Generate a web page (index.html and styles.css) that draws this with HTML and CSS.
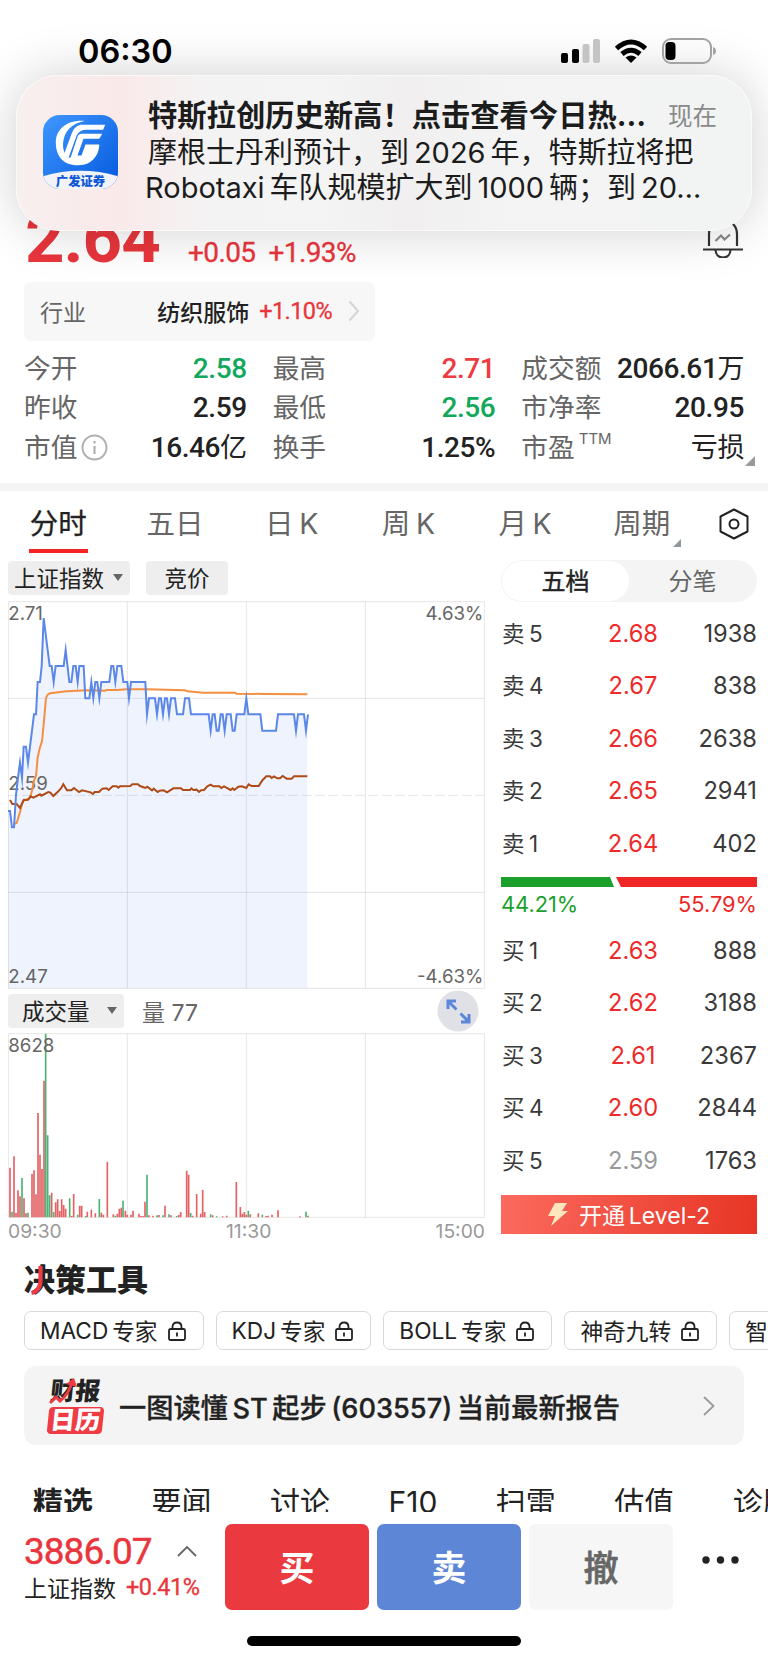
FILE: index.html
```html
<!DOCTYPE html>
<html lang="zh-CN">

<head>
    <meta charset="UTF-8">
    <meta name="viewport" content="width=device-width, initial-scale=1.0">
    <title>行情</title>
    <link rel="stylesheet" href="styles.css">
</head>

<body>
    <header class="status-bar">
        <span class="clock">06:30</span>
        <svg class="status-icons" width="156" height="28" viewBox="0 0 156 28">
            <rect x="0" y="16" width="7" height="10" rx="2" />
            <rect x="11" y="12" width="7" height="14" rx="2" />
            <rect x="21.500" y="7" width="7" height="19" rx="2" fill="#c4c4c4" />
            <rect x="32" y="2" width="7" height="24" rx="2" fill="#c4c4c4" />
            <g fill="none" stroke="#000" stroke-width="5">
                <path d="M55.500 11.500Q70 -1.500 84.500 11.500" />
                <path d="M61 17Q70 9.500 79 17" />
            </g>
            <path d="M70 26L64.500 20.500Q70 16.500 75.500 20.500Z" />
            <rect x="102" y="2" width="48" height="24" rx="8" fill="none" stroke="#a3a3a3" stroke-width="2" />
            <rect x="104.500" y="5" width="10" height="18" rx="4" />
            <path d="M152 10Q155 11 155 14Q155 17 152 18Z" fill="#a3a3a3" />
        </svg>
    </header>

    <div class="notice">
        <svg class="app-icon" width="75" height="75" viewBox="0 0 76 76">
            <defs>
                <linearGradient id="appBlue" x1="0" y1="0" x2="1" y2="1">
                    <stop offset="0" stop-color="#3f97ff" />
                    <stop offset="1" stop-color="#0458dc" />
                </linearGradient>
                <clipPath id="appShape"><rect width="76" height="75" rx="17" /></clipPath>
            </defs>
            <g clip-path="url(#appShape)">
                <rect width="76" height="76" fill="url(#appBlue)" />
                <path d="M0 62Q38 51 76 62V76H0Z" fill="#f1f3f8" />
            </g>
            <path d="M42 6C22 5 13 16 13 28C13 43 22 51 36 51C50 51 57 40 57 30H43L39 41L35 41L41 24H57L60 19H39Q36 19 35 22L28 43L25 43C20 38 19 29 22 21C25 13 32 8 42 6Z" fill="#fff" />
            <path d="M38 10H63L61 15H44Q37 15 34 21L26 43H20L29 19Q31 12 38 10Z" fill="#fff" />
            <text x="38" y="72" text-anchor="middle" class="app-name">广发证券</text>
        </svg>
        <div class="notice-text">
            <div class="notice-head">
                <strong>特斯拉创历史新高！点击查看今日热…</strong>
                <time>现在</time>
            </div>
            <p>摩根士丹利预计，到<i></i>2026<i></i>年，特斯拉将把</p>
            <p class="pull">Robotaxi<i></i>车队规模扩大到<i></i>1000<i></i>辆；到<i></i>20…</p>
        </div>
    </div>

    <main>
        <section class="quote">
            <div class="price-row">
                <span class="price">2.64</span>
                <span class="change">+0.05</span>
                <span class="change">+1.93%</span>
                <svg class="bell" width="40" height="44" viewBox="0 0 40 44" fill="none" stroke="#333" stroke-width="2.200">
                    <path d="M6 32V20C6 12 12 6 20 6S34 12 34 20V32" />
                    <path d="M0 35.500H40" />
                    <path d="M12.500 36C13 46 27 46 27.500 36" />
                    <path d="M12.500 27L18 21.500L21.500 25.500L27 20.500" stroke="#888" />
                </svg>
            </div>

            <div class="industry">
                <span class="industry-label">行业</span>
                <span class="industry-name">纺织服饰</span>
                <span class="industry-rate">+1.10%</span>
                <svg width="12" height="22" viewBox="0 0 12 22"><path d="M1.500 1.500L10 11L1.500 20.500" fill="none" stroke="#d4d4d4" stroke-width="2" /></svg>
            </div>

            <div class="stats">
                <dl>
                    <div><dt>今开</dt><dd class="down">2.58</dd></div>
                    <div><dt>昨收</dt><dd>2.59</dd></div>
                    <div>
                        <dt>市值<svg class="info" width="27" height="27" viewBox="0 0 27 27"><circle cx="13.500" cy="13.500" r="12" fill="none" stroke="#b0b0b0" stroke-width="2" /><path d="M13.500 12V20M13.500 7V9.500" stroke="#aaa" stroke-width="2" /></svg></dt>
                        <dd>16.46<small>亿</small></dd>
                    </div>
                </dl>
                <dl>
                    <div><dt>最高</dt><dd class="up">2.71</dd></div>
                    <div><dt>最低</dt><dd class="down">2.56</dd></div>
                    <div><dt>换手</dt><dd>1.25%</dd></div>
                </dl>
                <dl>
                    <div><dt>成交额</dt><dd>2066.61<small>万</small></dd></div>
                    <div><dt>市净率</dt><dd>20.95</dd></div>
                    <div class="more-corner"><dt>市盈<sup>TTM</sup></dt><dd><small>亏损</small></dd></div>
                </dl>
            </div>
        </section>

        <nav class="period-tabs">
            <a class="active">分时</a>
            <a>五日</a>
            <a>日<i></i>K</a>
            <a>周<i></i>K</a>
            <a>月<i></i>K</a>
            <a class="has-corner">周期</a>
            <svg width="30" height="32" viewBox="0 0 30 32" fill="none" stroke="#222" stroke-width="2">
                <path d="M15 1.500L28.500 8.500V23.500L15 30.500L1.500 23.500V8.500Z" stroke-linejoin="round" />
                <circle cx="15" cy="16" r="4.500" />
            </svg>
        </nav>

        <section class="trade">
            <div class="charts">
                <div class="tool-row">
                    <button class="pill index-pill">上证指数<b class="caret"></b></button>
                    <button class="pill auction-pill">竞价</button>
                </div>

                <svg class="price-chart" width="477" height="388" viewBox="24 31 1431 1164">
                    <path class="area" d="M24 661H30L36 710H42L48 613L54 560L60 516L66 562L71 468H78L84 516L90 468L102 371H108L113 274H120L125 226L131 82L149 226H155L161 274L167 226H191L197 178L208 274H214L220 226H227L233 274L238 226H251L256 323H268L274 274L280 323L286 274H292L298 323L304 274H328L334 226H340L346 274L352 226H364L370 274H382L387 323L393 274H436L441 371L447 323H465L471 371L477 323H483L489 371L495 323H501L507 371L513 323H525L531 371H549L555 323H567L573 371H626L632 420L638 371H644L650 420H656L662 371H668L674 420L680 371H692L698 420H704L710 371H733L739 323L745 371H781L787 420H828L834 371H882L888 420L894 371H912L918 420L922 371V1193H24Z" />
                    <g class="grid">
                        <rect x="25" y="33" width="1428" height="1160" />
                        <path d="M382 33V1193M739 33V1193M1096 33V1193M25 323H1453M25 905H1453" />
                        <path d="M25 614H1453" stroke-dasharray="30 10" />
                    </g>
                    <g class="axis-text">
                        <text x="25" y="88">2.71</text>
                        <text x="25" y="599">2.59</text>
                        <text x="25" y="1178">2.47</text>
                        <text x="1450" y="88" text-anchor="end">4.63%</text>
                        <text x="1450" y="1178" text-anchor="end">-4.63%</text>
                    </g>
                    <polyline class="line avg" points="42,700 50,697 60,665 66,640 72,628 84,626 90,622 96,600 102,570 108,556 113,500 120,470 126,452 132,390 138,322 143,312 150,308 200,302 260,299 315,300 320,298 350,298 380,296 440,296 555,299 562,302 610,306 705,306 710,309 800,310 922,311" />
                    <polyline class="line index" points="30,628 37,640 50,640 60,652 71,628 84,627 92,617 100,621 120,611 124,615 145,604 151,606 160,616 175,602 184,592 190,581 201,599 214,599 222,592 237,604 246,599 272,605 279,610 284,604 297,604 307,594 320,593 326,598 338,587 350,587 355,591 360,587 391,586 397,581 414,581 420,586 436,592 442,588 456,599 461,594 473,604 479,600 491,599 501,605 520,593 543,593 549,598 570,598 574,593 580,598 590,597 597,604 603,599 612,598 622,587 632,582 640,587 658,587 664,592 672,587 692,598 698,593 703,598 715,588 726,587 739,592 746,581 755,586 776,586 788,568 799,557 810,557 815,562 822,557 832,563 840,563 848,556 860,564 875,564 882,557 922,557" />
                    <path class="line price-line" d="M24 661H30L36 710H42L48 613L54 560L60 516L66 562L71 468H78L84 516L90 468L102 371H108L113 274H120L125 226L131 82L149 226H155L161 274L167 226H191L197 178L208 274H214L220 226H227L233 274L238 226H251L256 323H268L274 274L280 323L286 274H292L298 323L304 274H328L334 226H340L346 274L352 226H364L370 274H382L387 323L393 274H436L441 371L447 323H465L471 371L477 323H483L489 371L495 323H501L507 371L513 323H525L531 371H549L555 323H567L573 371H626L632 420L638 371H644L650 420H656L662 371H668L674 420L680 371H692L698 420H704L710 371H733L739 323L745 371H781L787 420H828L834 371H882L888 420L894 371H912L918 420L924 371" />
                </svg>

                <div class="volume-row">
                    <button class="pill volume-pill">成交量<b class="caret"></b></button>
                    <span class="volume-now">量 77</span>
                    <svg class="expand" width="42" height="42" viewBox="0 0 42 42">
                        <circle cx="21" cy="21" r="20.500" fill="#dfe1e6" />
                        <g fill="none" stroke="#5b86da" stroke-width="3">
                            <path d="M11 19V11H19M11 11L19.500 19.500" />
                            <path d="M32 24V32H24M32 32L23.500 23.500" />
                        </g>
                    </svg>
                </div>

                <svg class="volume-chart" width="477" height="185" viewBox="24 158 1431 555">
                    <g class="grid">
                        <rect x="25" y="160" width="1428" height="551" />
                        <path d="M382 160V711M739 160V711M1096 160V711" />
                    </g>
                    <path class="bars red" d="M30 711V562M42 711V528M48 711V698M54 711V630M60 711V648M72 711V654M78 711V699M96 711V581M102 711V570M108 711V642M114 711V398M120 711V523M126 711V566M132 711V301M155 711V637M167 711V666M173 711V657M179 711V692M185 711V657M191 711V674M197 711V685M215 711V707M221 711V641M239 711V676M245 711V676M262 711V694M274 711V688M286 711V699M304 711V697M310 711V703M322 711V544M340 711V702M352 711V700M358 711V685M364 711V682M376 711V691M382 711V703M393 711V703M399 711V691M417 711V700M423 711V707M429 711V707M435 711V664M447 711V705M459 711V706M477 711V704M495 711V676M513 711V705M536 711V704M542 711V695M560 711V571M566 711V583M578 711V706M590 711V641M602 711V700M608 711V629M614 711V695M638 711V705M668 711V708M680 711V706M709 711V605M721 711V680M727 711V700M733 711V695M739 711V703M751 711V702M775 711V699M798 711V707M804 711V706M816 711V703M834 711V690M900 711V708M924 711V706" />
                    <path class="bars green" d="M36 711V694M66 711V593M84 711V697M137 711V160M143 711V465M149 711V645M161 711V695M209 711V654M233 711V703M257 711V707M298 711V656M346 711V706M369 711V661M441 711V583M471 711V705M489 711V705M507 711V702M530 711V707M572 711V698M632 711V702M650 711V708M745 711V691M787 711V703M918 711V694" />
                    <text class="axis-text" x="25" y="216">8628</text>
                </svg>
                <div class="times"><span>09:30</span><span>11:30</span><span>15:00</span></div>
            </div>

            <aside class="book">
                <div class="switch"><span class="on">五档</span><span>分笔</span></div>
                <ul>
                    <li><span>卖<i></i>5</span><b>2.68</b><em>1938</em></li>
                    <li><span>卖<i></i>4</span><b>2.67</b><em>838</em></li>
                    <li><span>卖<i></i>3</span><b>2.66</b><em>2638</em></li>
                    <li><span>卖<i></i>2</span><b>2.65</b><em>2941</em></li>
                    <li><span>卖<i></i>1</span><b>2.64</b><em>402</em></li>
                </ul>
                <div class="ratio-bar"><span class="ratio-left"></span><span class="ratio-right"></span></div>
                <div class="ratio-text"><span>44.21%</span><span>55.79%</span></div>
                <ul>
                    <li><span>买<i></i>1</span><b>2.63</b><em>888</em></li>
                    <li><span>买<i></i>2</span><b>2.62</b><em>3188</em></li>
                    <li><span>买<i></i>3</span><b>2.61</b><em>2367</em></li>
                    <li><span>买<i></i>4</span><b>2.60</b><em>2844</em></li>
                    <li><span>买<i></i>5</span><b class="flat">2.59</b><em>1763</em></li>
                </ul>
                <button class="level2">
                    <svg width="21" height="25" viewBox="0 0 21 25"><path d="M7 1H19L14 9H20L3 24L7 14H0Z" fill="#ffe6bd" /></svg>
                    <span>开通<i></i>Level-2</span>
                </button>
            </aside>
        </section>

        <section class="tools">
            <h2>决策工具
                <svg class="title-stroke" width="14" height="30" viewBox="0 0 14 30"><path d="M10.500 0V14Q10.500 25 1.500 27" fill="none" stroke="#ef3b43" stroke-width="4.200" /></svg>
            </h2>
            <svg class="sprite" width="0" height="0">
                <symbol id="lock" viewBox="0 0 18 20">
                    <rect x="1" y="8" width="16" height="11" rx="1.500" />
                    <path d="M4.500 8V6Q4.500 1.500 9 1.500T13.500 6V8M9 11.500V15.500" />
                </symbol>
            </svg>
            <div class="chips">
                <span>MACD<i></i>专家<svg><use href="#lock" /></svg></span>
                <span>KDJ<i></i>专家<svg><use href="#lock" /></svg></span>
                <span>BOLL<i></i>专家<svg><use href="#lock" /></svg></span>
                <span>神奇九转<svg><use href="#lock" /></svg></span>
                <span>智能盯盘</span>
            </div>
            <div class="report">
                <div class="report-logo">
                    <span class="logo-top">财报</span>
                    <span class="logo-bottom">日历</span>
                    <svg width="28" height="27" viewBox="0 0 28 27"><path d="M1 25L7 19L11 23Q20 16 23 4" fill="none" stroke="#ef3b43" stroke-width="3" /><path d="M17 6L25 0L28 9Z" fill="#ef3b43" /></svg>
                </div>
                <span class="report-title">一图读懂<i></i>ST<i></i>起步<i></i>(603557)<i></i>当前最新报告</span>
                <svg class="report-arrow" width="12" height="20" viewBox="0 0 12 20"><path d="M1 1L10.500 10L1 19" fill="none" stroke="#999" stroke-width="1.800" /></svg>
            </div>
        </section>

        <nav class="news-tabs">
            <a class="active">精选</a><a>要闻</a><a>讨论</a><a>F10</a><a>扫雷</a><a>估值</a><a>诊股</a>
        </nav>
    </main>

    <footer>
        <div class="trade-bar">
            <div class="market">
                <div class="market-top">
                    <span class="market-value">3886.07</span>
                    <svg width="20" height="12" viewBox="0 0 20 12"><path d="M1 11L10 2L19 11" fill="none" stroke="#666" stroke-width="1.800" /></svg>
                </div>
                <div class="market-sub">上证指数<span>+0.41%</span></div>
            </div>
            <button class="buy">买</button>
            <button class="sell">卖</button>
            <button class="cancel">撤</button>
            <svg class="dots" width="38" height="8" viewBox="0 0 38 8"><circle cx="4" cy="4" r="3.700" /><circle cx="18.500" cy="4" r="3.700" /><circle cx="33" cy="4" r="3.700" /></svg>
        </div>
        <div class="home-indicator"></div>
    </footer>
</body>

</html>
```
FILE: styles.css
```css
* {
    box-sizing: border-box;
    margin: 0;
    padding: 0;
}

body {
    position: relative;
    width: 768px;
    height: 1663px;
    overflow: hidden;
    background: #fff;
    color: #222;
    font-family: Inter, "Noto Sans CJK SC", sans-serif;
    text-autospace: no-autospace;
}

svg {
    display: block;
    flex: none;
}

button {
    border: none;
    font-family: inherit;
}

/* thin gap between Chinese and Latin */
i {
    display: inline-block;
    width: 0.17em;
}

.status-bar {
    position: relative;
    z-index: 3;
    display: flex;
    justify-content: space-between;
    height: 75px;
    padding: 37px 51px 0 78px;
}

.clock {
    font-size: 32.5px;
    font-weight: 600;
    line-height: 29px;
    color: #000;
}

/* notification */
.notice {
    position: absolute;
    z-index: 2;
    left: 16px;
    top: 75px;
    width: 736px;
    height: 156px;
    display: flex;
    gap: 30px;
    padding: 39px 34px 0 26px;
    border: 1px solid rgba(255, 255, 255, 0.6);
    border-radius: 42px;
    background: linear-gradient(90deg, #f8efef 0, #fae9e9 100px, #f4f3f3 190px, #f4f4f4 300px, #f1eff0 390px, #f4f4f4 500px, #f2f3f3 100%);
    box-shadow: 0 0 52px rgba(0, 0, 0, 0.19);
}

.app-name {
    font-size: 12.5px;
    font-weight: 900;
    fill: #0b57d8;
}

.notice-text {
    flex: 1;
    margin-top: -17px;
    white-space: nowrap;
    color: #1c1c1c;
    font-size: 29px;
    line-height: 35.5px;
}

.notice-head {
    display: flex;
    justify-content: space-between;
}

.notice-head strong {
    font-weight: 700;
    font-size: 29.3px;
}

.notice-head time {
    padding-top: 1px;
    color: #8a8a8a;
    font-size: 24.5px;
}

.notice-text .pull {
    margin-left: -3px;
}

/* quote */
.quote {
    height: 408px;
    padding: 0 24px;
}

.price-row {
    display: flex;
    align-items: baseline;
    height: 207px;
    position: relative;
    padding-top: 124px;
    color: #e9353c;
    font-family: Roboto, sans-serif;
}

.price {
    width: 164px;
    font-size: 69px;
    font-weight: 700;
    line-height: 80px;
    padding-left: 1px;
    letter-spacing: -1px;
}

.change {
    margin-right: 13px;
    font-size: 28px;
    letter-spacing: -0.6px;
    -webkit-text-stroke: 0.3px;
}

.bell {
    position: absolute;
    right: 1px;
    top: 139px;
}

.industry {
    display: flex;
    align-items: center;
    width: 351px;
    height: 59px;
    padding: 0 15px 2px 16px;
    border-radius: 7px;
    background: #f7f7f7;
    font-size: 23px;
}

.industry-label {
    flex: 1;
    color: #666;
}

.industry-name {
    font-weight: 500;
}

.industry-rate {
    margin: 0 16px 0 10px;
    color: #e9353c;
    font: 23.5px Roboto, sans-serif;
    letter-spacing: -0.6px;
    -webkit-text-stroke: 0.3px;
}

.stats {
    display: flex;
    gap: 26px;
    padding-top: 8px;
    font-size: 26.7px;
    line-height: 39.4px;
}

.stats dl {
    width: 223px;
}

.stats dl > div {
    position: relative;
    display: flex;
    justify-content: space-between;
    height: 39.4px;
}

.stats dt {
    display: flex;
    align-items: center;
    color: #666;
    white-space: nowrap;
}

.stats dd {
    font-family: Roboto, "Noto Sans CJK SC", sans-serif;
    font-weight: 500;
    font-size: 28px;
    letter-spacing: -0.4px;
    white-space: nowrap;
}

.stats small {
    font-size: 27px;
    font-weight: 400;
}

.stats sup {
    align-self: flex-start;
    margin-left: 4px;
    font-size: 15px;
    line-height: 22px;
}

.info {
    margin-left: 4px;
}

.stats .up {
    color: #ee3a41;
}

.stats .down {
    color: #12a85b;
}

.more-corner::after {
    content: "";
    position: absolute;
    right: -11px;
    bottom: 1px;
    border: 5px solid;
    border-color: transparent #999 #999 transparent;
}

/* period tabs */
.period-tabs {
    display: grid;
    grid-template-columns: repeat(6, 116.7px) 68px;
    height: 70px;
    border-top: 8px solid #f4f4f4;
    color: #666;
    font-size: 28.5px;
    line-height: 66px;
    text-align: center;
}

.period-tabs a {
    position: relative;
}

.period-tabs i {
    width: 0.2em;
}

.period-tabs .active {
    color: #222;
    -webkit-text-stroke: 0.3px;
}

.period-tabs .active::after {
    content: "";
    position: absolute;
    left: 29px;
    top: 58px;
    width: 59px;
    height: 4px;
    background: #f52424;
}

.has-corner::after {
    content: "";
    position: absolute;
    right: 19px;
    top: 48px;
    border: 4.5px solid;
    border-color: transparent #8f979f #8f979f transparent;
}

.period-tabs svg {
    margin: 17px 0 0 19px;
}

/* charts and order book */
.trade {
    display: flex;
    gap: 16px;
    height: 703px;
    padding: 7px 11px 0 8px;
}

.charts {
    width: 477px;
}

.tool-row {
    display: flex;
    gap: 16px;
    height: 41px;
    padding-top: 1px;
}

.pill {
    display: flex;
    align-items: center;
    height: 34px;
    padding-bottom: 2px;
    border-radius: 4px;
    background: #eee;
    color: #222;
    font-size: 22.5px;
}

.index-pill {
    width: 122px;
    padding-left: 6px;
}

.auction-pill {
    width: 82px;
    justify-content: center;
}

.volume-pill {
    width: 116px;
    padding-left: 14px;
}

.caret {
    margin-left: 9px;
    border: 5px solid transparent;
    border-top: 7px solid #666;
    border-bottom: 0;
}

.volume-pill .caret {
    margin-left: 17px;
}

.grid {
    fill: none;
    stroke: #000;
    stroke-opacity: 0.1;
    stroke-width: 3;
}

.axis-text {
    fill: #666;
    font-size: 56px;
}

.area {
    fill: #eef3fe;
}

.line {
    fill: none;
    stroke-miterlimit: 12;
}

.price-line {
    stroke: #5b87e8;
    stroke-width: 6;
}

.avg {
    stroke: #f58f40;
    stroke-width: 6;
}

.index {
    stroke: #b04a16;
    stroke-width: 6;
}

.volume-row {
    display: flex;
    align-items: center;
    height: 44px;
    color: #666;
    font-size: 23px;
}

.volume-now {
    flex: 1;
    padding: 0 0 1px 18px;
}

.expand {
    margin-right: 6px;
}

.bars {
    fill: none;
    stroke-width: 5;
}

.red {
    stroke: #e46164;
}

.green {
    stroke: #4cb377;
}

.times {
    display: flex;
    justify-content: space-between;
    color: #999;
    font-size: 19.3px;
    line-height: 27px;
}

.book {
    width: 256px;
}

.switch {
    display: flex;
    height: 42px;
    padding: 1px;
    border-radius: 21px;
    background: #f4f4f4;
    color: #666;
    font-size: 24px;
    line-height: 41px;
    text-align: center;
}

.switch span {
    flex: 1;
}

.switch .on {
    border-radius: 20px;
    background: #fff;
    color: #222;
    -webkit-text-stroke: 0.4px;
}

.book ul {
    list-style: none;
    padding-top: 5px;
}

.book li {
    display: grid;
    grid-template-columns: 90px 84px 1fr;
    height: 52.4px;
    color: #3a3a3a;
    font-size: 23.7px;
    line-height: 53.4px;
}

.book li span {
    padding-left: 1px;
    font-size: 22.5px;
}

.book li i {
    width: 0.2em;
}

.book b {
    color: #ee2a2a;
    font-weight: 400;
    text-align: center;
}

.book .flat {
    color: #999;
}

.book em {
    font-style: normal;
    text-align: right;
}

.ratio-bar {
    display: flex;
    height: 10px;
    margin-top: 8px;
}

.ratio-left {
    width: 113px;
    background: #1aa02b;
    clip-path: polygon(0 0, 109px 0, 100% 100%, 0 100%);
}

.ratio-right {
    flex: 1;
    margin-left: 2px;
    background: #ee2626;
    clip-path: polygon(0 0, 100% 0, 100% 100%, 5px 100%);
}

.ratio-text {
    display: flex;
    justify-content: space-between;
    height: 37px;
    color: #1aa02b;
    font-size: 21.8px;
    line-height: 35px;
}

.ratio-text span + span {
    color: #ee2626;
}

.book .ratio-text + ul {
    padding-top: 0;
}

.level2 {
    display: flex;
    align-items: center;
    justify-content: center;
    gap: 10px;
    width: 256px;
    height: 39px;
    margin-top: 9px;
    background: linear-gradient(100deg, #fb6a5e, #e73525);
    color: #fff;
    font-size: 23px;
}

/* decision tools */
.tools {
    height: 228px;
    padding: 4px 0 0 24px;
}

.tools h2 {
    position: relative;
    height: 51px;
    font-size: 31px;
    font-weight: 900;
    line-height: 40px;
}

.title-stroke {
    position: absolute;
    left: 6px;
    top: 6px;
}

.sprite {
    position: absolute;
}

.chips {
    display: flex;
    gap: 12px;
    overflow: hidden;
}

.chips > span {
    flex: none;
    display: flex;
    align-items: center;
    height: 39px;
    padding: 0 17px 0 15px;
    border: 1px solid #d9d9d9;
    border-radius: 7px;
    font-size: 22.7px;
    white-space: nowrap;
}

.chips svg {
    width: 18px;
    height: 20px;
    margin-left: 10px;
    fill: none;
    stroke: #222;
    stroke-width: 1.8;
}

.report {
    display: flex;
    align-items: center;
    width: 720px;
    height: 79px;
    margin-top: 16px;
    padding: 0 29px 0 24px;
    border-radius: 12px;
    background: #f4f4f4;
}

.report-logo {
    position: relative;
    width: 55px;
    height: 56px;
    margin-right: 16px;
    font-weight: 900;
    font-size: 25px;
    line-height: 27px;
    text-align: center;
}

.report-logo span {
    display: block;
    height: 27px;
    transform: skewX(-6deg);
}

.report-logo .logo-bottom {
    margin-top: 2px;
    border-radius: 4px;
    background: #ef3b43;
    color: #fff;
}

.report-logo svg {
    position: absolute;
    left: 1px;
    top: 0;
}

.report-title {
    flex: 1;
    font-size: 27.2px;
    font-weight: 500;
    -webkit-text-stroke: 0.3px;
}

.news-tabs {
    display: flex;
    gap: 58.5px;
    height: 28px;
    padding-left: 33px;
    overflow: hidden;
    font-size: 30px;
    line-height: 37px;
    white-space: nowrap;
}

.news-tabs a {
    flex: none;
}

.news-tabs .active {
    font-weight: 700;
}

/* bottom bar */
footer {
    background: #fff;
}

.trade-bar {
    display: flex;
    gap: 8px;
    height: 124px;
    padding: 12px 0 0 24px;
}

.market {
    width: 193px;
    padding-top: 6px;
}

.market-top {
    display: flex;
    align-items: center;
    justify-content: space-between;
    width: 173px;
    height: 42px;
    color: #e9353c;
}

.market-value {
    font: 37px Roboto, sans-serif;
    letter-spacing: -1px;
    -webkit-text-stroke: 0.4px;
}

.market-sub {
    display: flex;
    align-items: center;
    gap: 10px;
    height: 30px;
    font-size: 23px;
    white-space: nowrap;
}

.market-sub span {
    color: #e9353c;
    font: 23.5px Roboto, sans-serif;
    letter-spacing: -0.5px;
    -webkit-text-stroke: 0.3px;
}

.trade-bar button {
    width: 144px;
    height: 86px;
    padding-bottom: 3px;
    border-radius: 7px;
    color: #fff;
    font-size: 35px;
    font-weight: 700;
}

.trade-bar .buy {
    background: #ea393f;
}

.trade-bar .sell {
    background: #5d86d6;
}

.trade-bar .cancel {
    background: #f6f6f6;
    color: #666;
    font-weight: 500;
    -webkit-text-stroke: 0.6px;
}

.dots {
    margin: 32px 0 0 21px;
    fill: #222;
}

.home-indicator {
    width: 274px;
    height: 10px;
    margin: 0 auto;
    border-radius: 5px;
    background: #000;
}
```
